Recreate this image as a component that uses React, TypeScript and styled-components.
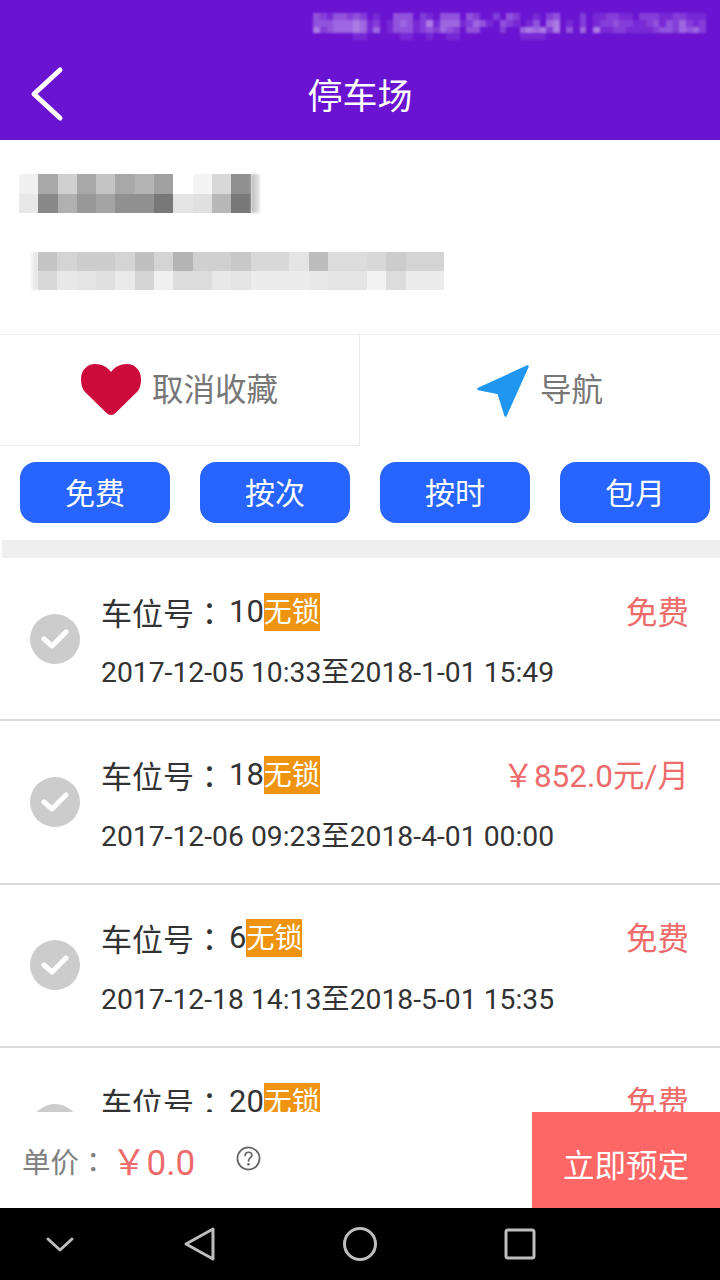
import styled, { createGlobalStyle } from "styled-components";

const GlobalStyle = createGlobalStyle`
  html, body {
    margin: 0;
    padding: 0;
    background: #fff;
  }
  * {
    box-sizing: border-box;
  }
`;

const fontStack = `Roboto, "Noto Sans CJK SC", sans-serif`;

const Page = styled.div`
  width: 720px;
  height: 1280px;
  display: flex;
  flex-direction: column;
  overflow: hidden;
  background: #fff;
  font-family: ${fontStack};
`;

const Header = styled.header`
  height: 140px;
  flex-shrink: 0;
  display: flex;
  flex-direction: column;
  background: #6a14d1;
`;

const StatusBar = styled.div`
  height: 48px;
  padding: 13px 14px 0 0;
  display: flex;
  justify-content: flex-end;
`;

const TitleBar = styled.div`
  flex: 1;
  display: flex;
  align-items: center;
  padding-left: 30px;
`;

const BackButton = styled.svg`
  width: 34px;
  height: 56px;
  display: block;
`;

const Title = styled.div`
  flex: 1;
  margin-left: -34px;
  padding-right: 30px;
  padding-bottom: 2px;
  text-align: center;
  color: #fff;
  font-size: 35px;
`;

const MosaicGrid = styled.div<{ $columns: number; $cell: number; $height: number; $blur: number }>`
  display: grid;
  grid-template-columns: repeat(${(p) => p.$columns}, ${(p) => p.$cell}px);
  grid-auto-rows: ${(p) => p.$height}px;
  filter: blur(${(p) => p.$blur}px);
`;

const MosaicCell = styled.i<{ $shade: string }>`
  display: block;
  background: ${(p) => p.$shade};
`;

const Mosaic = ({
  rows,
  cell,
  height,
  blur = 0.7,
}: {
  rows: string[][];
  cell: number;
  height: number;
  blur?: number;
}) => (
  <MosaicGrid $columns={rows[0].length} $cell={cell} $height={height} $blur={blur}>
    {rows.flat().map((shade, i) => (
      <MosaicCell key={i} $shade={shade} />
    ))}
  </MosaicGrid>
);

const gray = (v: string) => `#${v}${v}${v}`;
const grays = (s: string) => s.split(" ").map(gray);

// status bar levels, 0 is the header colour
const lilac = (level: string) => {
  const n = Number(level) * 0.088;
  const r = Math.round(106 + (255 - 106) * n);
  const g = Math.round(20 + (255 - 20) * n);
  const b = Math.round(209 + (255 - 209) * n);
  return `rgb(${r}, ${g}, ${b})`;
};

const statusRows = [
  "32133232010033302103330320020320010230002011221102221122111",
  "33344454120134312514441243103210130450102012232211231324212",
  "52344454140133312324320330002004545250304051122111123324342",
  "00000011000001100100110000000001111000000000000000000000000",
].map((row) => row.split("").map(lilac));

const InfoBlock = styled.section`
  height: 194px;
  flex-shrink: 0;
  display: flex;
  flex-direction: column;
  padding-top: 34px;
`;

const NameLine = styled.div`
  display: flex;
  padding-left: 19px;
`;

const NameTail = styled.div`
  width: 9px;
  height: 39px;
  background: linear-gradient(90deg, #b8b8b8, #ececec);
  filter: blur(1px);
`;

const AddressLine = styled.div`
  display: flex;
  padding-left: 31px;
  margin-top: 39px;
`;

const AddressHead = styled.div`
  width: 7px;
  height: 38px;
  background: linear-gradient(90deg, #f6f6f6, #e0e0e0);
  filter: blur(1px);
`;

const ActionRow = styled.div`
  height: 112px;
  flex-shrink: 0;
  display: grid;
  grid-template-columns: 360px 360px;
  border-top: 1px solid #eeeeee;
`;

const ActionCell = styled.div<{ $boxed?: boolean }>`
  display: flex;
  align-items: center;
  justify-content: center;
  gap: 11px;
  color: #777;
  font-size: 31.5px;
  border-right: ${(p) => (p.$boxed ? "1px solid #ececec" : "none")};
  border-bottom: ${(p) => (p.$boxed ? "1px solid #ececec" : "none")};
`;

const ActionLabel = styled.span`
  margin-bottom: 7px;
`;

const HeartIcon = styled.svg`
  width: 60px;
  height: 52px;
  display: block;
`;

const NavIcon = styled.svg`
  width: 52px;
  height: 52px;
  display: block;
`;

const ChipRow = styled.div`
  flex-shrink: 0;
  display: flex;
  gap: 30px;
  padding: 16px 10px 17px 20px;
`;

const Chip = styled.div`
  width: 150px;
  height: 61px;
  padding-bottom: 3px;
  display: flex;
  align-items: center;
  justify-content: center;
  border-radius: 16px;
  background: #2864ff;
  color: #fff;
  font-size: 30px;
`;

const Band = styled.div`
  height: 18px;
  flex-shrink: 0;
  margin-left: 2px;
  background: #efefef;
`;

const List = styled.div`
  flex: 1;
  min-height: 0;
  overflow: hidden;
`;

const Spot = styled.div`
  height: 163.4px;
  padding: 0 31px 0 30px;
  display: flex;
  align-items: center;
  gap: 21px;
  border-bottom: 2px solid #dcdcdc;
`;

const CheckBadge = styled.div`
  width: 50px;
  height: 50px;
  flex-shrink: 0;
  border-radius: 50%;
  background: #cccccc;
  display: flex;
  align-items: center;
  justify-content: center;
`;

const SpotBody = styled.div`
  flex: 1;
  min-width: 0;
  padding-top: 7px;
  display: flex;
  flex-direction: column;
  gap: 24px;
`;

const SpotTop = styled.div`
  display: flex;
  align-items: center;
  justify-content: space-between;
  height: 38px;
`;

const SpotName = styled.div`
  display: flex;
  align-items: center;
  color: #333;
  font-size: 31px;
`;

const Colon = styled.span`
  font-family: "Noto Sans CJK TC", sans-serif;
  margin-right: 4px;
`;

const LockTag = styled.span`
  height: 38px;
  margin-top: 1px;
  line-height: 40px;
  background: #ee9411;
  color: #fff;
  font-size: 28px;
`;

const Price = styled.div`
  margin-bottom: 3px;
  color: #ee6b6b;
  font-size: 31.5px;
`;

const SpotDate = styled.div`
  color: #333;
  font-size: 28.3px;
  line-height: 38px;
  min-height: 38px;
`;

const Footer = styled.footer`
  position: relative;
  z-index: 1;
  height: 96px;
  flex-shrink: 0;
  display: flex;
  align-items: center;
  background: #fff;
  padding-left: 22px;
`;

const PriceLabel = styled.span`
  color: #808080;
  font-size: 28.5px;
`;

const FooterColon = styled.span`
  font-family: "Noto Sans CJK TC", sans-serif;
`;

const Total = styled.span`
  margin-left: 4px;
  margin-bottom: 2px;
  color: #ee6b6b;
  font-size: 35px;
`;

const HelpIcon = styled.svg`
  width: 25px;
  height: 25px;
  margin-left: 41px;
  margin-bottom: 3px;
  display: block;
`;

const BookButton = styled.div`
  margin-left: auto;
  width: 188px;
  height: 100%;
  display: flex;
  align-items: center;
  justify-content: center;
  background: #ff6666;
  color: #fff;
  font-size: 31.5px;
  padding-top: 6px;
`;

const NavBar = styled.nav`
  height: 72px;
  flex-shrink: 0;
  background: #000;
  display: grid;
  grid-template-columns: 120px 160px 160px 160px 120px;
  align-items: center;
  justify-items: center;
`;

const NavGlyph = styled.svg`
  width: 40px;
  height: 40px;
  display: block;
  fill: none;
  stroke: #bdbdbd;
  stroke-width: 3;
  stroke-linejoin: round;
  stroke-linecap: round;
`;

const spots = [
  { no: "10", date: "2017-12-05 10:33至2018-1-01 15:49", price: "免费" },
  { no: "18", date: "2017-12-06 09:23至2018-4-01 00:00", price: "￥852.0元/月" },
  { no: "6", date: "2017-12-18 14:13至2018-5-01 15:35", price: "免费" },
  { no: "20", date: "", price: "免费" },
];

const App = () => {
  return (
    <Page>
      <GlobalStyle />
      <Header>
        <StatusBar>
          <Mosaic rows={statusRows} cell={6.67} height={6.8} blur={1} />
        </StatusBar>
        <TitleBar>
          <BackButton viewBox="0 0 34 56">
            <path d="M30 4 L4 28 L30 52" fill="none" stroke="#fff" strokeWidth="5" strokeLinecap="round" strokeLinejoin="round" />
          </BackButton>
          <Title>停车场</Title>
        </TitleBar>
      </Header>

      <InfoBlock>
        <NameLine>
          <Mosaic
            rows={[
              grays("f0 a8 d0 a8 c4 a8 b4 a0 ff f4 d8 90"),
              grays("e8 88 b0 98 a4 90 90 78 e4 e0 b8 78"),
            ]}
            cell={19.3}
            height={19.5}
          />
          <NameTail />
        </NameLine>
        <AddressLine>
          <AddressHead />
          <Mosaic
            rows={[
              grays("c4 d4 cc cc d4 c0 d4 b4 d0 d0 c8 d8 d8 e4 bc dc dc d8 cc d4 d4"),
              grays("d8 e8 e4 e0 ea d4 f0 dc dc e8 e4 ec ec ec e8 e4 e4 f2 dc ec ec"),
            ]}
            cell={19.35}
            height={19}
          />
        </AddressLine>
      </InfoBlock>

      <ActionRow>
        <ActionCell $boxed>
          <HeartIcon viewBox="0 0 60 52">
            <path
              d="M30 51 Q27.5 51 25 48.5 L4 28 C1 25 0 20 0 15 C0 6 6.5 0 14 0 C21 0 26.5 3 30 8 C33.5 3 39 0 46 0 C53.5 0 60 6 60 15 C60 20 59 25 56 28 L35 48.5 Q32.5 51 30 51 Z"
              fill="#cc0a3c"
            />
          </HeartIcon>
          <ActionLabel>取消收藏</ActionLabel>
        </ActionCell>
        <ActionCell>
          <NavIcon viewBox="0 0 52 52">
            <path
              d="M50.5 1.5 L1.5 24 L21.5 28 L28.5 50.5 Z"
              fill="#2196f0"
              stroke="#2196f0"
              strokeWidth="2.5"
              strokeLinejoin="round"
            />
          </NavIcon>
          <ActionLabel>导航</ActionLabel>
        </ActionCell>
      </ActionRow>

      <ChipRow>
        <Chip>免费</Chip>
        <Chip>按次</Chip>
        <Chip>按时</Chip>
        <Chip>包月</Chip>
      </ChipRow>

      <Band />

      <List>
        {spots.map((spot) => (
          <Spot key={spot.no}>
            <CheckBadge>
              <svg width="28" height="22" viewBox="0 0 28 22">
                <path d="M3 11 L11 18 L25 4" fill="none" stroke="#fff" strokeWidth="5" strokeLinecap="round" strokeLinejoin="round" />
              </svg>
            </CheckBadge>
            <SpotBody>
              <SpotTop>
                <SpotName>
                  车位号<Colon>：</Colon>{spot.no}
                  <LockTag>无锁</LockTag>
                </SpotName>
                <Price>{spot.price}</Price>
              </SpotTop>
              <SpotDate>{spot.date}</SpotDate>
            </SpotBody>
          </Spot>
        ))}
      </List>

      <Footer>
        <PriceLabel>
          单价<FooterColon>：</FooterColon>
        </PriceLabel>
        <Total>￥0.0</Total>
        <HelpIcon viewBox="0 0 26 26">
          <circle cx="13" cy="13" r="11.5" fill="none" stroke="#666" strokeWidth="1.8" />
          <path d="M9.5 10 C9.5 7.5 11 6.5 13 6.5 C15 6.5 16.5 8 16.5 9.8 C16.5 12 13 12.5 13 15.5" fill="none" stroke="#666" strokeWidth="1.8" strokeLinecap="round" />
          <circle cx="13" cy="19" r="1.3" fill="#666" />
        </HelpIcon>
        <BookButton>立即预定</BookButton>
      </Footer>

      <NavBar>
        <NavGlyph viewBox="0 0 40 40">
          <path d="M8 15 L20 26 L32 15" />
        </NavGlyph>
        <NavGlyph viewBox="0 0 40 40">
          <path d="M33 5 V35 L6 20 Z" />
        </NavGlyph>
        <NavGlyph viewBox="0 0 40 40">
          <circle cx="20" cy="20" r="15.5" />
        </NavGlyph>
        <NavGlyph viewBox="0 0 40 40">
          <rect x="6" y="6" width="28" height="28" rx="2" />
        </NavGlyph>
        <span />
      </NavBar>
    </Page>
  );
};

export default App;
